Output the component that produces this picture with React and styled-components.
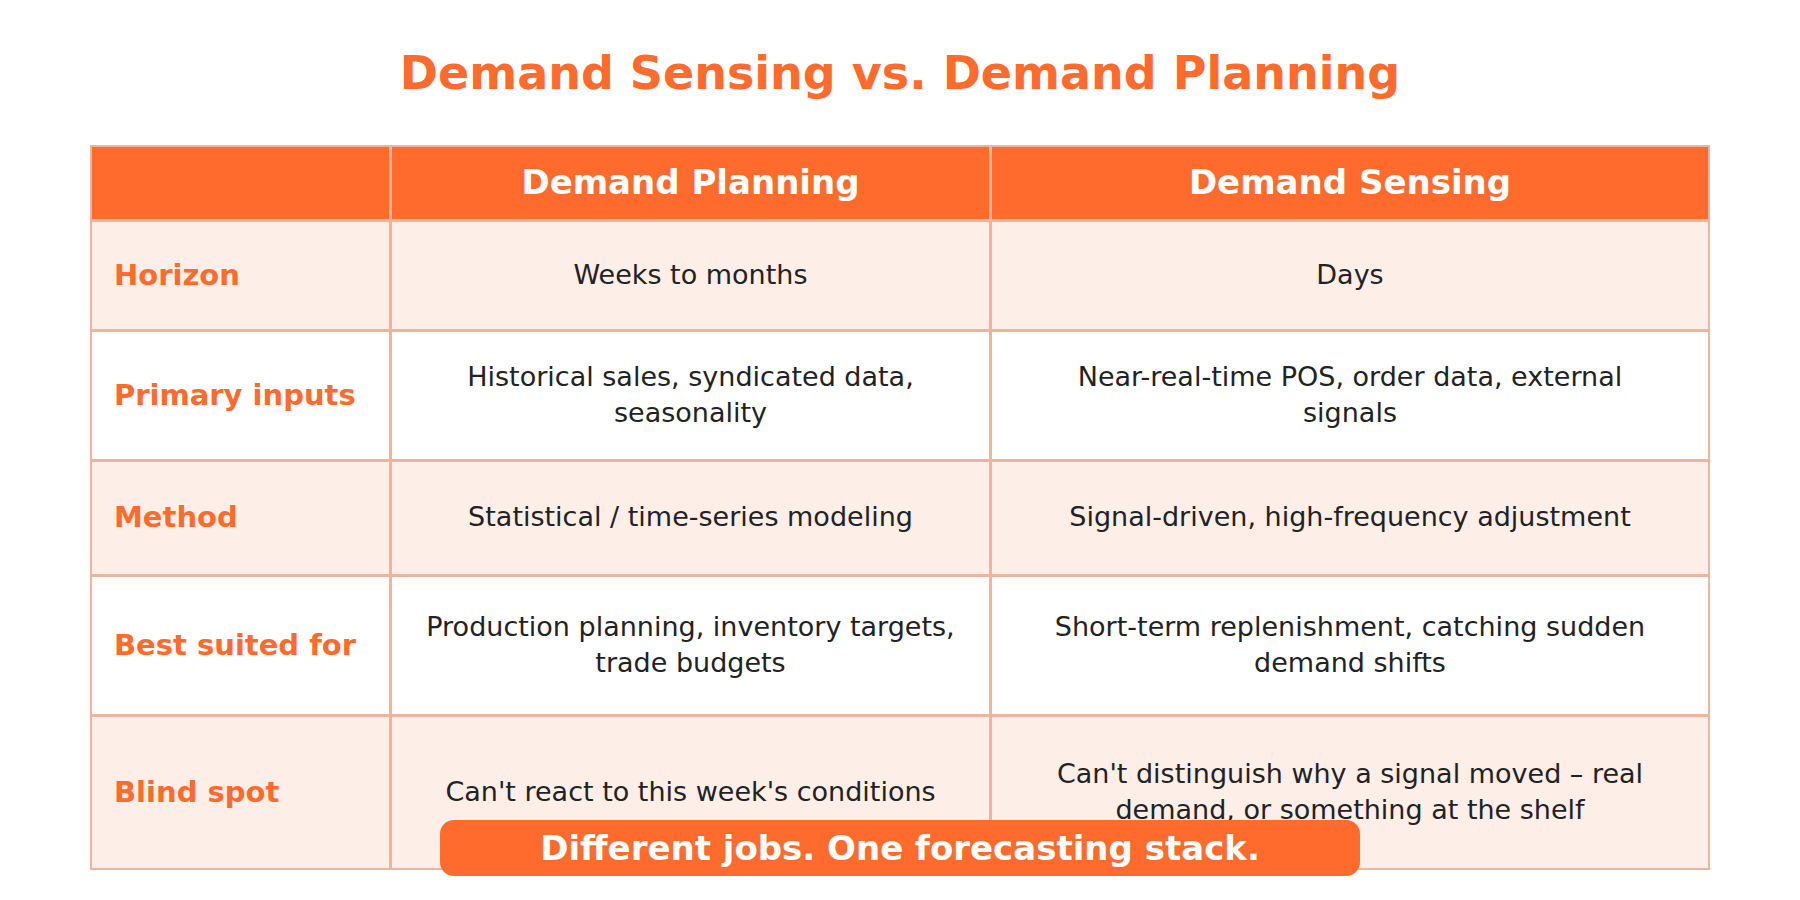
import React from 'react';
import styled, { createGlobalStyle } from 'styled-components';

const ORANGE = '#FF6B2D';
const LINE = '#EFB49D';
const TINT = '#FDEEE8';

const GlobalStyle = createGlobalStyle`
  html, body {
    margin: 0;
    padding: 0;
    background: #fff;
  }
  body {
    font-family: "DejaVu Sans", Verdana, sans-serif;
  }
`;

const Page = styled.div`
  width: 1800px;
  height: 900px;
  display: flex;
  flex-direction: column;
  align-items: center;
  padding-top: 45px;
  box-sizing: border-box;
  overflow: hidden;
`;

const Title = styled.h1`
  margin: 0 0 44px;
  font-size: 46px;
  line-height: 56px;
  font-weight: 700;
  color: ${ORANGE};
`;

const Table = styled.div`
  width: 1620px;
  box-sizing: border-box;
  display: flex;
  flex-direction: column;
  gap: 3px;
  border: 2px solid ${LINE};
  background: ${LINE};
`;

const Row = styled.div`
  display: grid;
  grid-template-columns: 297px 597px 1fr;
  gap: 3px;
  height: ${p => p.$h}px;
`;

const Cell = styled.div`
  display: flex;
  align-items: center;
  justify-content: ${p => (p.$left ? 'flex-start' : 'center')};
  text-align: ${p => (p.$left ? 'left' : 'center')};
  padding: 0 ${p => p.$pad || 22}px 2px;
  background: ${p => (p.$head ? ORANGE : p.$tint ? TINT : '#fff')};
  color: #222;
  font-size: 27px;
  line-height: 36px;
`;

const HeadText = styled.span`
  color: #fff;
  font-size: 34px;
  font-weight: 700;
`;

const Label = styled.span`
  color: ${ORANGE};
  font-size: 29px;
  font-weight: 700;
`;

const Banner = styled.div`
  position: relative;
  z-index: 1;
  margin-top: -50px;
  width: 920px;
  height: 56px;
  border-radius: 14px;
  background: ${ORANGE};
  display: flex;
  align-items: center;
  justify-content: center;
  color: #fff;
  font-size: 34px;
  font-weight: 700;
`;

const rows = [
  { label: 'Horizon', plan: 'Weeks to months', sense: 'Days', h: 107 },
  {
    label: 'Primary inputs',
    plan: 'Historical sales, syndicated data, seasonality',
    sense: 'Near-real-time POS, order data, external signals',
    h: 127,
  },
  {
    label: 'Method',
    plan: 'Statistical / time-series modeling',
    sense: 'Signal-driven, high-frequency adjustment',
    h: 112,
  },
  {
    label: 'Best suited for',
    plan: 'Production planning, inventory targets, trade budgets',
    sense: 'Short-term replenishment, catching sudden demand shifts',
    h: 137,
  },
  {
    label: 'Blind spot',
    plan: "Can't react to this week's conditions",
    sense: "Can't distinguish why a signal moved \u2013 real demand, or something at the shelf",
    h: 151,
  },
];

const App = () => (
  <Page>
    <GlobalStyle />
    <Title>Demand Sensing vs. Demand Planning</Title>
    <Table>
      <Row $h={72}>
        <Cell $head />
        <Cell $head>
          <HeadText>Demand Planning</HeadText>
        </Cell>
        <Cell $head>
          <HeadText>Demand Sensing</HeadText>
        </Cell>
      </Row>
      {rows.map((r, i) => (
        <Row key={r.label} $h={r.h}>
          <Cell $left $tint={i % 2 === 0}>
            <Label>{r.label}</Label>
          </Cell>
          <Cell $tint={i % 2 === 0} $pad={30}>
            {r.plan}
          </Cell>
          <Cell $tint={i % 2 === 0} $pad={50}>
            {r.sense}
          </Cell>
        </Row>
      ))}
    </Table>
    <Banner>Different jobs. One forecasting stack.</Banner>
  </Page>
);

export default App;
